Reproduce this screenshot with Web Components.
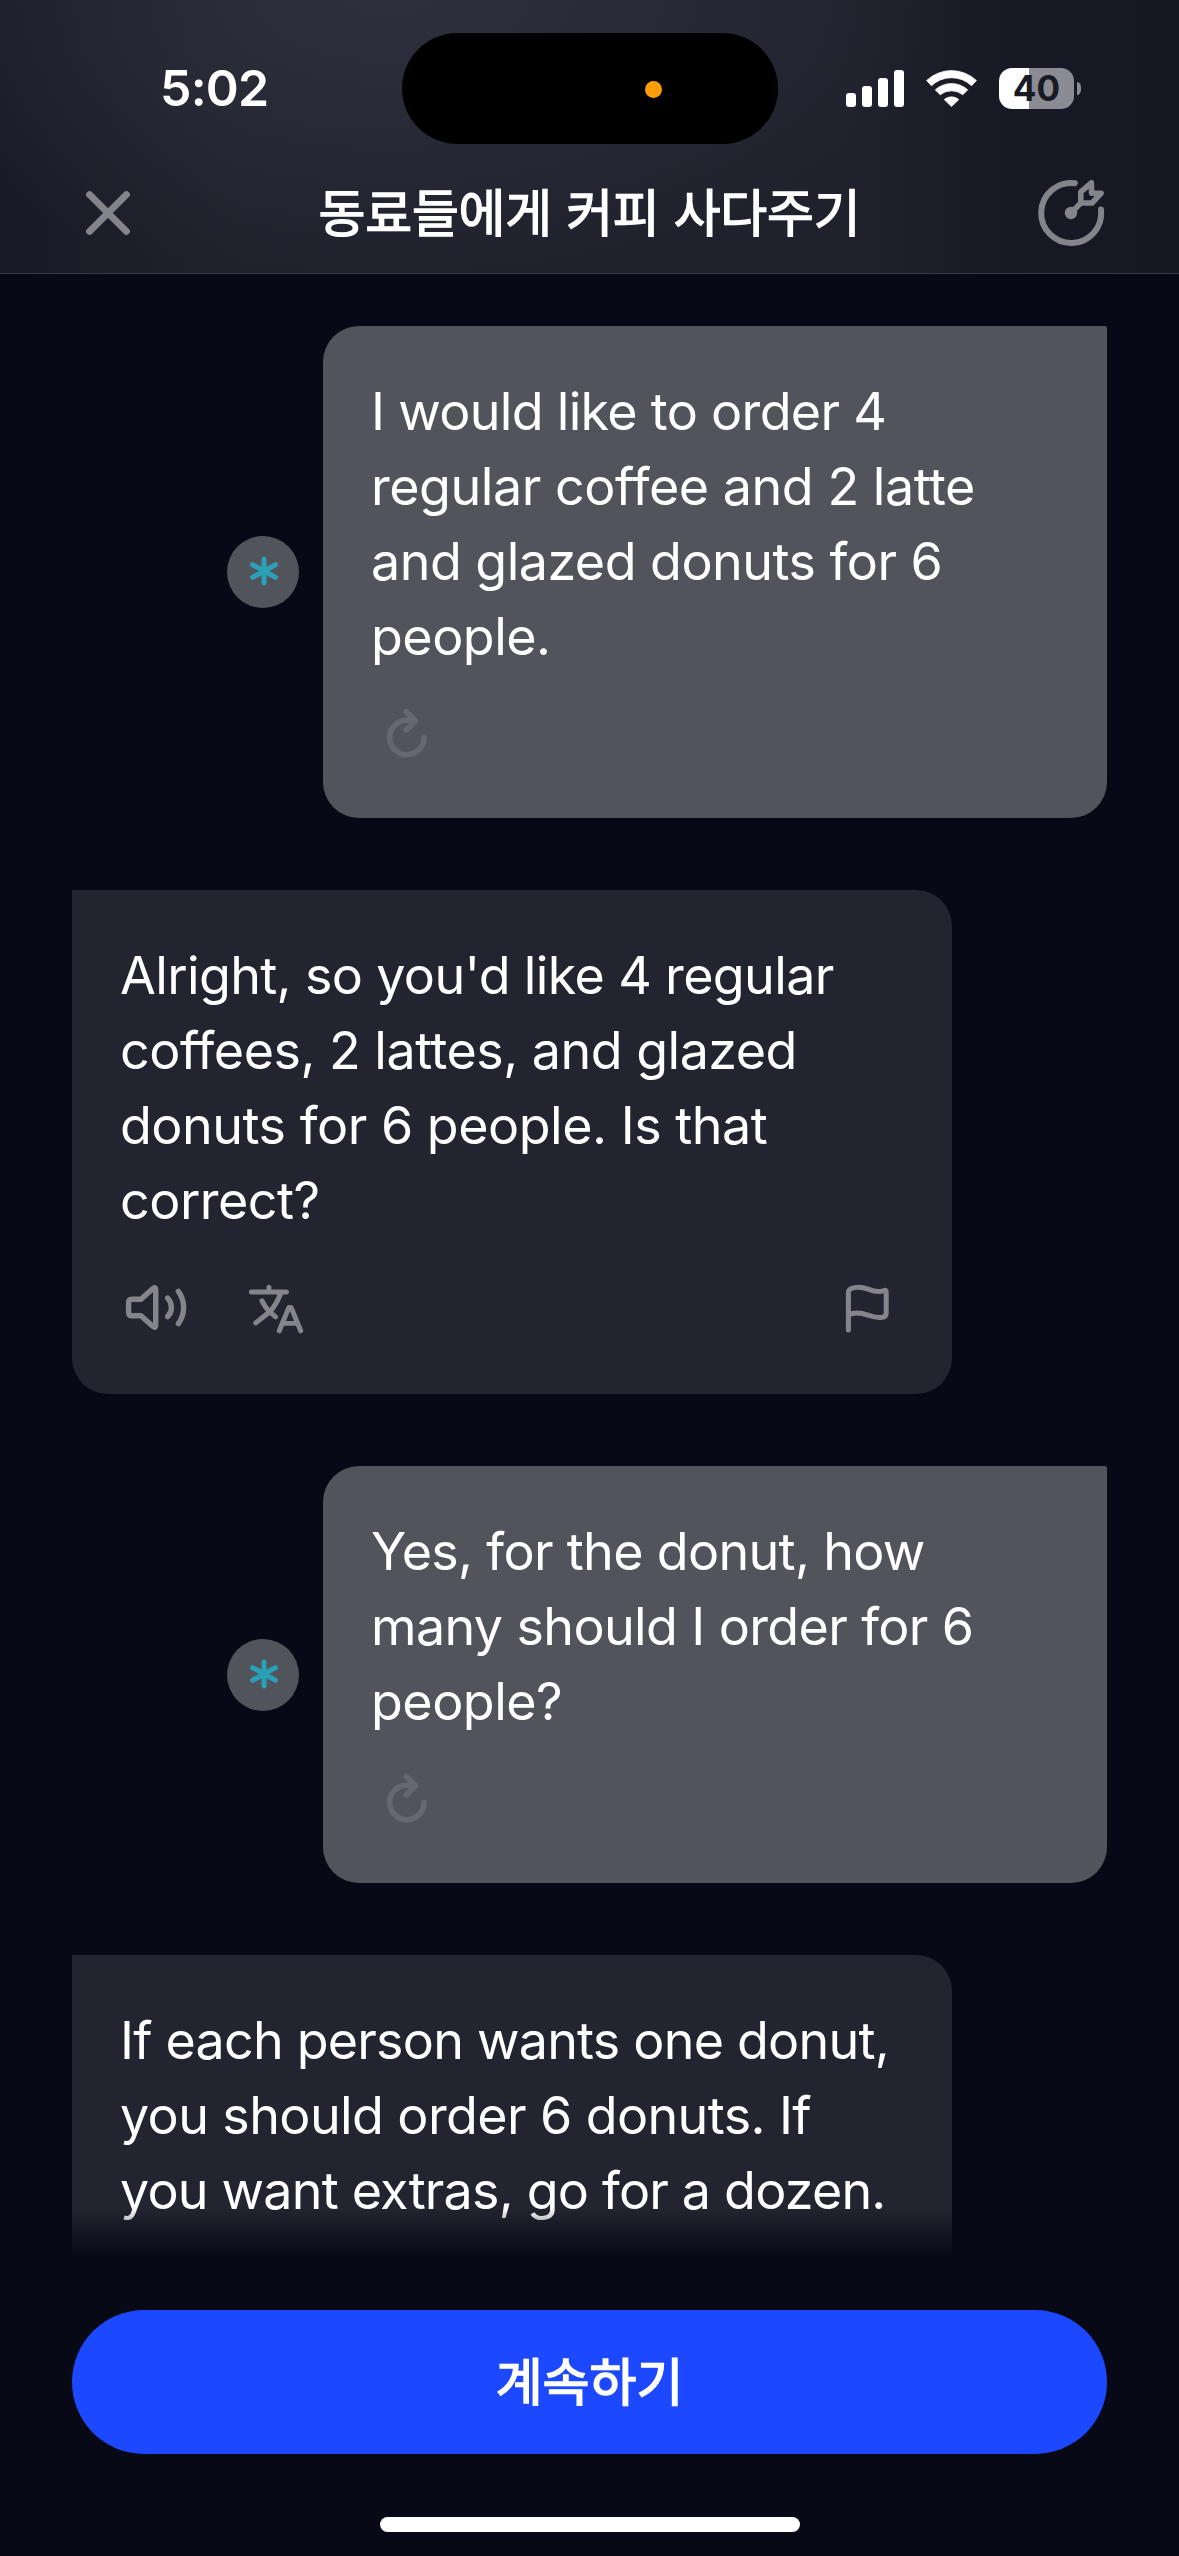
<!DOCTYPE html>
<html lang="ko">
<head>
<meta charset="utf-8">
<title>동료들에게 커피 사다주기</title>
<style>
  html, body { margin: 0; padding: 0; }
  body {
    width: 1179px; height: 2556px; overflow: hidden;
    background: #070a16; color: #fff;
    font-family: Inter, "Noto Sans CJK KR", sans-serif;
  }
</style>
</head>
<body>
<chat-screen>
  <status-bar slot="header" time="5:02" battery="40"></status-bar>
  <nav-header slot="header">동료들에게 커피 사다주기</nav-header>

  <chat-message from="user">
    <text-line track="-.68">I would like to order 4</text-line>
    <text-line track="-.46">regular coffee and 2 latte</text-line>
    <text-line track="-.52">and glazed donuts for 6</text-line>
    <text-line track="-.5">people.</text-line>
  </chat-message>
  <chat-message from="bot">
    <text-line track="-.64">Alright, so you'd like 4 regular</text-line>
    <text-line track="-.5">coffees, 2 lattes, and glazed</text-line>
    <text-line track="-.48">donuts for 6 people. Is that</text-line>
    <text-line track="-.5">correct?</text-line>
  </chat-message>
  <chat-message from="user">
    <text-line track="-.67">Yes, for the donut, how</text-line>
    <text-line track="-.62">many should I order for 6</text-line>
    <text-line track="-.5">people?</text-line>
  </chat-message>
  <chat-message from="bot">
    <text-line track="-.78">If each person wants one donut,</text-line>
    <text-line track="-.6">you should order 6 donuts. If</text-line>
    <text-line track="-.8">you want extras, go for a dozen.</text-line>
  </chat-message>

  <action-footer slot="footer">계속하기</action-footer>
</chat-screen>

<script>
const define = (name, html) => customElements.define(name, class extends HTMLElement {
  constructor() {
    super();
    this.attachShadow({ mode: 'open' });
  }
  connectedCallback() {
    if (this.shadowRoot.childNodes.length) return;
    this.shadowRoot.innerHTML = typeof html === 'function' ? html(this) : html;
  }
});

const ICONS = {
  close: '<path d="M17.6 17.6L54.4 54.4M54.4 17.6L17.6 54.4" stroke-width="7"/>',
  goal: `<path d="M39.8 6.2A30 30 0 1 0 66 32.4" stroke-width="6"/>
    <circle cx="36" cy="36" r="6.2" fill="currentColor" stroke="none"/>
    <path d="M36 36L45.8 26V14.8L56.4 5.8L56.6 16.2H66.2L57 26H45.8" stroke-width="5.6"/>`,
  retry: '<path d="M53 39.3A17.2 17.2 0 1 1 35.8 22.3H44M35.2 13.6L44.5 22.8L35.2 32" stroke-width="5.6"/>',
  speaker: `<path d="M12 25.3H21L33 14.6Q35.7 12.6 35.7 15.6V51.4Q35.7 54.4 33 52.4L21 41.7H12Q8.6 41.7 8.6 38.4V28.6Q8.6 25.3 12 25.3Z" stroke-width="5.4"/>
    <path d="M47.6 24.2A13 13 0 0 1 47.6 42.6M58.4 17.4A27.4 27.4 0 0 1 58.4 49.6" stroke-width="5.4"/>`,
  translate: `<path d="M11.4 18H46.4M28.9 13.2V18M40.7 19.5Q35.5 32.5 29.2 38.2L15.8 48.9" stroke-width="5"/>
    <path d="M22 26.8Q25 33 29.2 37.4L35.6 42.8" stroke-width="5"/>
    <polyline points="39.3,56.8 48.8,33.6 51.2,33.6 60.7,56.8" stroke-width="5"/>
    <line x1="43.4" y1="49.4" x2="56.6" y2="49.4" stroke-width="4.6"/>`,
  flag: '<path d="M16.4 56V18.4C16.4 13.6 26 11.6 36 15.2S49 17.6 52.6 16.4Q54.2 16 54.2 17.8V39.4C54.2 44.6 46 44.6 36 41.2S21 38.6 16.4 41" stroke-width="5"/>',
  star: '<path d="M37 23V47M25.6 28.7L48.4 41.3M48.4 28.7L25.6 41.3" stroke-width="5"/>'
};

define('ui-icon', el => `
  <style>
    :host { display: block; width: 72px; height: 72px; flex: none; }
    svg { display: block; }
  </style>
  <svg width="72" height="72" viewBox="0 0 72 72" fill="none" stroke="currentColor"
       stroke-linecap="round" stroke-linejoin="round">${ICONS[el.getAttribute('name')]}</svg>`);

define('text-line', el => `
  <style>
    :host { display: block; white-space: nowrap; letter-spacing: ${el.getAttribute('track')}px; }
  </style>
  <slot></slot>`);

define('status-bar', el => `
  <style>
    :host { display: grid; grid-template-columns: 402px 376px 401px; align-items: center; height: 177px; }
    .time { padding: 0 0 2px 160px; font-size: 50px; font-weight: 600; line-height: 60px; letter-spacing: -.8px; }
    .island { height: 111px; border-radius: 56px; background: #000; display: flex; align-items: center; justify-content: flex-end; padding-right: 116px; box-sizing: border-box; }
    .dot { width: 17px; height: 17px; border-radius: 50%; background: #ff9d0b; margin-top: 2px; }
    .right { display: flex; align-items: center; padding: 0 0 1px 68px; }
    svg { display: block; flex: none; }
    .wifi { margin-left: 22px; }
    .battery { margin-left: 22px; width: 75px; height: 41px; border-radius: 13px;
      background: linear-gradient(90deg, #fff 30px, #8b8b93 30px);
      display: flex; align-items: center; justify-content: center;
      color: #181a26; font-size: 35px; font-weight: 650; line-height: 41px; }
    .knob { margin-left: 3px; width: 4px; height: 13px; border-radius: 0 5px 5px 0 / 0 6.5px 6.5px 0; background: #8b8b93; }
  </style>
  <div class="time">${el.getAttribute('time')}</div>
  <div class="island"><div class="dot"></div></div>
  <div class="right">
    <svg width="58" height="37" viewBox="0 0 58 37" fill="#fff">
      <rect x="0" y="23" width="10" height="14" rx="3"/><rect x="16" y="16" width="10" height="21" rx="3"/>
      <rect x="32" y="8" width="10" height="29" rx="3"/><rect x="48" y="0" width="10" height="37" rx="3"/>
    </svg>
    <svg class="wifi" width="51" height="37" viewBox="0 0 51 37" fill="#fff" stroke="#fff" stroke-width=".8" stroke-linejoin="round">
      <path d="M.6 10.5A36.3 36.3 0 0 1 50.4 10.5L45.6 15.7A29.2 29.2 0 0 0 5.4 15.7Z"/>
      <path d="M9.3 19.8A24.2 24.2 0 0 1 41.7 19.8L36.8 24.8A18 18 0 0 0 14.2 24.8Z"/>
      <path d="M18.2 29.6A11 11 0 0 1 32.8 29.6L25.5 36.6Z"/>
    </svg>
    <div class="battery">${el.getAttribute('battery')}</div>
    <div class="knob"></div>
  </div>`);

define('nav-header', `
  <style>
    :host { display: flex; align-items: center; justify-content: space-between; padding: 0 72px 24px; }
    ui-icon { color: #84858b; }
    .title { font-family: "Noto Sans CJK KR", sans-serif; font-size: 51px; font-weight: 400; line-height: 66px; letter-spacing: -.2px;
      padding-bottom: 6px; -webkit-text-stroke: 1.4px #fff; white-space: nowrap; }
  </style>
  <ui-icon name="close"></ui-icon>
  <div class="title"><slot></slot></div>
  <ui-icon name="goal"></ui-icon>`);

define('chat-message', el => {
  const user = el.getAttribute('from') === 'user';
  return `
  <style>
    :host { display: flex; align-items: center; gap: 24px; justify-content: ${user ? 'flex-end' : 'flex-start'}; flex: none; }
    .avatar { width: 72px; height: 72px; border-radius: 50%; background: #52545c; color: #2a9fb5; }
    .bubble { box-sizing: border-box; padding: 48px; font-size: 52px; line-height: 75px;
      ${user ? 'width: 784px; background: #52545c; border-radius: 36px 2px 36px 36px;'
             : 'width: 880px; background: #22242f; border-radius: 0 36px 36px 36px;'} }
    .actions { display: flex; gap: 48px; margin-top: ${user ? 24 : 36}px; color: ${user ? '#666871' : '#84858b'}; }
    .end { margin-left: auto; }
  </style>
  ${user ? '<div class="avatar"><ui-icon name="star"></ui-icon></div>' : ''}
  <div class="bubble">
    <slot></slot>
    <div class="actions">${user ? '<ui-icon name="retry"></ui-icon>'
      : '<ui-icon name="speaker"></ui-icon><ui-icon name="translate"></ui-icon><ui-icon class="end" name="flag"></ui-icon>'}</div>
  </div>`;
});

define('action-footer', `
  <style>
    :host { display: flex; flex-direction: column; position: relative; height: 300px; box-sizing: border-box; padding: 54px 72px 0; background: #070a16; }
    /* Fades the conversation out above the button. */
    .fade { position: absolute; left: 0; right: 0; top: -48px; height: 48px; background: linear-gradient(#070a1600, #070a16); }
    button { border: 0; height: 144px; border-radius: 72px; background: #1c48ff; color: #fff; padding: 0 0 6px; box-sizing: border-box;
      font: 400 51px/138px "Noto Sans CJK KR", sans-serif; -webkit-text-stroke: 1.6px #fff; }
    .home { width: 420px; height: 15px; border-radius: 8px; background: #fff; margin: 63px 0 0 308px; }
  </style>
  <div class="fade"></div>
  <button><slot></slot></button>
  <div class="home"></div>`);

define('chat-screen', `
  <style>
    :host { display: flex; flex-direction: column; width: 1179px; height: 2556px; }
    header { flex: none; border-bottom: 1px solid #393b46; background:
      radial-gradient(ellipse 560px 290px at 390px -10px, rgba(66,69,82,.42), rgba(66,69,82,.24) 50%, rgba(66,69,82,0)),
      linear-gradient(90deg, #181a27 0, #1b1d29 8%, #1f212d 20%, #1f212d 55%, #1f212d 72%, #171925 86%, #151723 100%); }
    main { flex: 1; min-height: 0; overflow: hidden; display: flex; flex-direction: column; gap: 72px; padding: 52px 72px 0; }
  </style>
  <header><slot name="header"></slot></header>
  <main><slot></slot></main>
  <slot name="footer"></slot>`);
</script>
</body>
</html>
